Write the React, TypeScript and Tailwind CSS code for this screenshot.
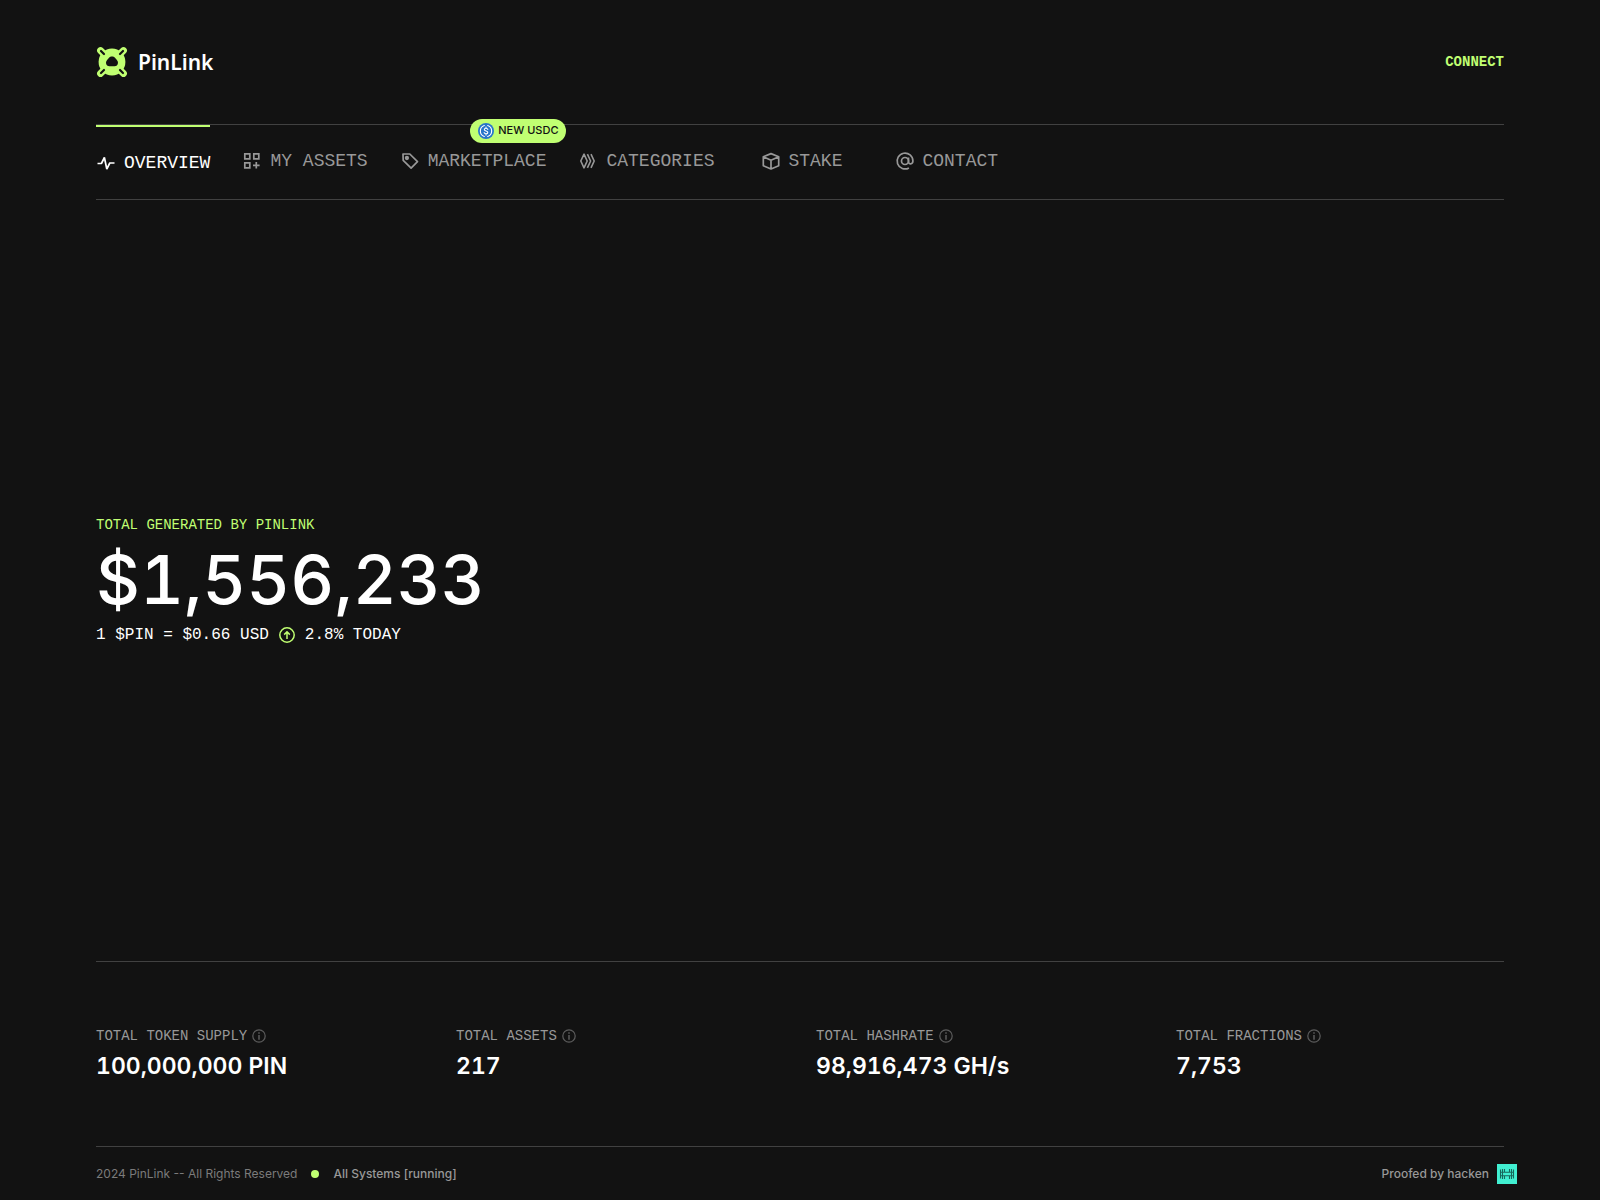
import type { ReactNode } from "react";

const mono = "font-['Liberation_Mono',monospace]";

function Logo() {
  return (
    <svg width="32" height="32" viewBox="0 0 32 32" aria-hidden="true">
      <circle cx="16" cy="16" r="13.4" fill="#c0ff72" />
      {[0, 90, 180, 270].map((angle) => (
        <g key={angle} transform={`rotate(${angle} 16 16)`} strokeLinecap="round">
          <path d="M4.5 4.5L8 8" stroke="#c0ff72" strokeWidth="6.8" />
          <path d="M5 5L8 8" stroke="#121212" strokeWidth="2.2" />
        </g>
      ))}
      <path d="M12.6 12.2c.7-1 1.900-1.700 3.400-1.700s2.700.7 3.400 1.700c.5.7.8 1 1.300 1.600 1.800 1.900 1.600 4.500.2 5.700-.7.6-1.400.8-2.300.8h-5.200c-.9 0-1.600-.2-2.300-.8-1.400-1.200-1.600-3.800.2-5.700.5-.6.8-.9 1.300-1.600z" fill="#121212" />
    </svg>
  );
}

function PulseIcon() {
  return (
    <svg width="20" height="20" viewBox="0 0 20 20" fill="none" stroke="currentColor" strokeWidth="1.7" aria-hidden="true">
      <path d="M1.5 10.5h3.9L8.4 4.5l2.4 11.5 3-6H18.5" strokeLinejoin="bevel" />
    </svg>
  );
}

function GridPlusIcon() {
  return (
    <svg width="20" height="20" viewBox="0 0 20 20" fill="none" stroke="currentColor" strokeWidth="1.7" aria-hidden="true">
      <path d="M2.8 2.8h5v5h-5zM11.8 2.8h5v5h-5zM2.8 11.8h5v5h-5zM14.3 11v6.6M11 14.3h6.6" />
    </svg>
  );
}

function TagIcon() {
  return (
    <svg width="20" height="20" viewBox="0 0 20 20" fill="none" stroke="currentColor" strokeWidth="1.7" strokeLinejoin="round" aria-hidden="true">
      <path d="M3 3h6.8l7.7 7.7-6.4 6.4L3.2 9.4z" />
      <circle cx="6.9" cy="7" r="1.3" fill="currentColor" />
    </svg>
  );
}

function LayersIcon() {
  return (
    <svg width="20" height="20" viewBox="0 0 20 20" fill="none" stroke="currentColor" strokeWidth="1.6" strokeLinejoin="round" aria-hidden="true">
      <path d="M6 3.2L2.8 10 6 16.8 9.2 10zM9.4 3.2l3.2 6.8-3.2 6.8M13 3.2l3.2 6.8-3.2 6.8" />
    </svg>
  );
}

function CubeIcon() {
  return (
    <svg width="20" height="20" viewBox="0 0 20 20" fill="none" stroke="currentColor" strokeWidth="1.7" strokeLinejoin="round" aria-hidden="true">
      <path d="M11 2.6l7.7 3.2v9L11 18 3.3 14.8V5.8zM3.3 5.8L11 9.3l7.7-3.5M11 9.3V18" />
    </svg>
  );
}

function AtIcon() {
  return (
    <svg width="20" height="20" viewBox="0 0 20 20" fill="none" stroke="currentColor" strokeWidth="1.7" aria-hidden="true">
      <circle cx="11" cy="10" r="3.5" />
      <path d="M14.5 6.5v4.300c0 3 4.400 2.800 4.400-.8a7.900 7.900 0 1 0-4 6.900" />
    </svg>
  );
}

function UsdcIcon() {
  return (
    <svg width="16" height="16" viewBox="0 0 16 16" fill="none" stroke="#fff" strokeWidth="1.1" strokeLinecap="round" aria-hidden="true">
      <circle cx="8" cy="8" r="8" fill="#2775ca" stroke="none" />
      <path d="M6.3 2.5a5.8 5.8 0 0 0 0 11M9.7 2.5a5.8 5.8 0 0 1 0 11" />
      <path d="M9.8 6.4c-.2-.8-.9-1.2-1.8-1.2-1 0-1.7.5-1.700 1.300C6.300 8.500 9.800 7.400 9.800 9.500c0 .8-.8 1.300-1.800 1.300s-1.800-.5-1.900-1.300M8 4v1M8 11v1" />
    </svg>
  );
}

function InfoIcon() {
  return (
    <svg width="14" height="14" viewBox="0 0 14 14" fill="none" stroke="#5c5c5c" aria-hidden="true">
      <circle cx="7" cy="7" r="6.2" strokeWidth="1.2" />
      <path d="M7 3.3v1.4M7 5.9v4.8" strokeWidth="1.5" />
    </svg>
  );
}

function ArrowUpIcon() {
  return (
    <svg width="16" height="16" viewBox="0 0 16 16" fill="none" stroke="#c0ff72" strokeWidth="1.5" aria-hidden="true">
      <circle cx="8" cy="8" r="7.2" />
      <path d="M8 12V5M5.2 7.6L8 4.8l2.8 2.8" />
    </svg>
  );
}

function HackenIcon() {
  return (
    <svg width="20" height="20" viewBox="0 0 20 20" fill="none" stroke="#17685b" aria-hidden="true">
      <path d="M0 0h20v20H0z" fill="#41efd1" stroke="none" />
      <path d="M3.5 5.5v9M5.5 5v10M7.5 5v3.5M7.5 11.5V15M12.5 5v3.5M12.5 11.5V15M14.5 5v10M16.5 5.5v9M3.5 8.2h13M3.5 11.8h13" strokeWidth="1.1" />
    </svg>
  );
}

type NavItem = { label: string; icon: ReactNode; className?: string; badge?: string };

const navItems: NavItem[] = [
  { label: "OVERVIEW", icon: <PulseIcon /> },
  { label: "MY ASSETS", icon: <GridPlusIcon /> },
  { label: "MARKETPLACE", icon: <TagIcon />, badge: "NEW USDC" },
  { label: "CATEGORIES", icon: <LayersIcon />, className: "min-w-[150px]" },
  { label: "STAKE", icon: <CubeIcon />, className: "min-w-[102px]" },
  { label: "CONTACT", icon: <AtIcon /> },
];

const stats = [
  { label: "TOTAL TOKEN SUPPLY", value: "100,000,000 PIN" },
  { label: "TOTAL ASSETS", value: "217" },
  { label: "TOTAL HASHRATE", value: "98,916,473 GH/s" },
  { label: "TOTAL FRACTIONS", value: "7,753" },
];

export default function App() {
  return (
    <div className="flex min-h-screen flex-col bg-[#121212] px-24 font-['Inter',sans-serif] text-white">
      <header className="flex h-[124px] items-center justify-between">
        <a href="#" className="flex items-center gap-2.5">
          <Logo />
          <span className="font-['Noto_Sans',sans-serif] text-[21px] leading-8 font-semibold">PinLink</span>
        </a>
        <button type="button" className={`${mono} text-sm font-bold text-[#c0ff72]`}>CONNECT</button>
      </header>

      <nav className="flex h-[76px] gap-8 border-y border-[#414141]">
        {navItems.map((item, index) => (
          <a
            key={item.label}
            href="#"
            className={`relative flex items-center gap-2 text-lg ${mono} ${item.className ?? ""} ${index === 0 ? "border-t-2 border-[#c0ff72] text-white" : "pb-0.5 text-[#989898]"}`}
          >
            {item.icon}
            {item.label}
            {item.badge && (
              <span className="absolute -top-1.5 -right-5 flex h-6 items-center gap-1 rounded-full bg-[#c0ff72] px-2 font-['Inter',sans-serif] text-[11px] font-medium whitespace-nowrap text-[#121212]">
                <UsdcIcon />
                {item.badge}
              </span>
            )}
          </a>
        ))}
      </nav>

      <main className="flex flex-1 flex-col">
        <section className="flex flex-1 flex-col justify-center">
          <h2 className={`${mono} text-sm leading-5 text-[#c0ff72]`}>TOTAL GENERATED BY PINLINK</h2>
          <p className="my-2 text-[68px] leading-[72px] font-medium tabular-nums">$1,556,233</p>
          <p className={`${mono} flex items-center gap-2.5 text-base`}>
            1 $PIN = $0.66 USD
            <ArrowUpIcon />
            2.8% TODAY
          </p>
        </section>

        <section className="grid h-[185px] grid-cols-4 content-center gap-8 border-t border-[#414141]">
          {stats.map((stat) => (
            <div key={stat.label}>
              <h3 className={`${mono} flex items-center gap-[5px] text-sm text-[#989898]`}>
                {stat.label}
                <InfoIcon />
              </h3>
              <p className="mt-1 text-[23px] leading-8 font-semibold tabular-nums">{stat.value}</p>
            </div>
          ))}
        </section>
      </main>

      <footer className="flex h-[54px] items-center justify-between border-t border-[#414141] text-xs text-[#989898]">
        <div className="flex items-center gap-3.5">
          <span className="text-[#7b7b7b]">2024 PinLink -- All Rights Reserved</span>
          <span className="size-2 rounded-full bg-[#c0ff72]" />
          <span className="font-medium">All Systems [running]</span>
        </div>
        <a href="#" className="-mr-[13px] flex items-center gap-2 font-medium">
          Proofed by hacken
          <HackenIcon />
        </a>
      </footer>
    </div>
  );
}
